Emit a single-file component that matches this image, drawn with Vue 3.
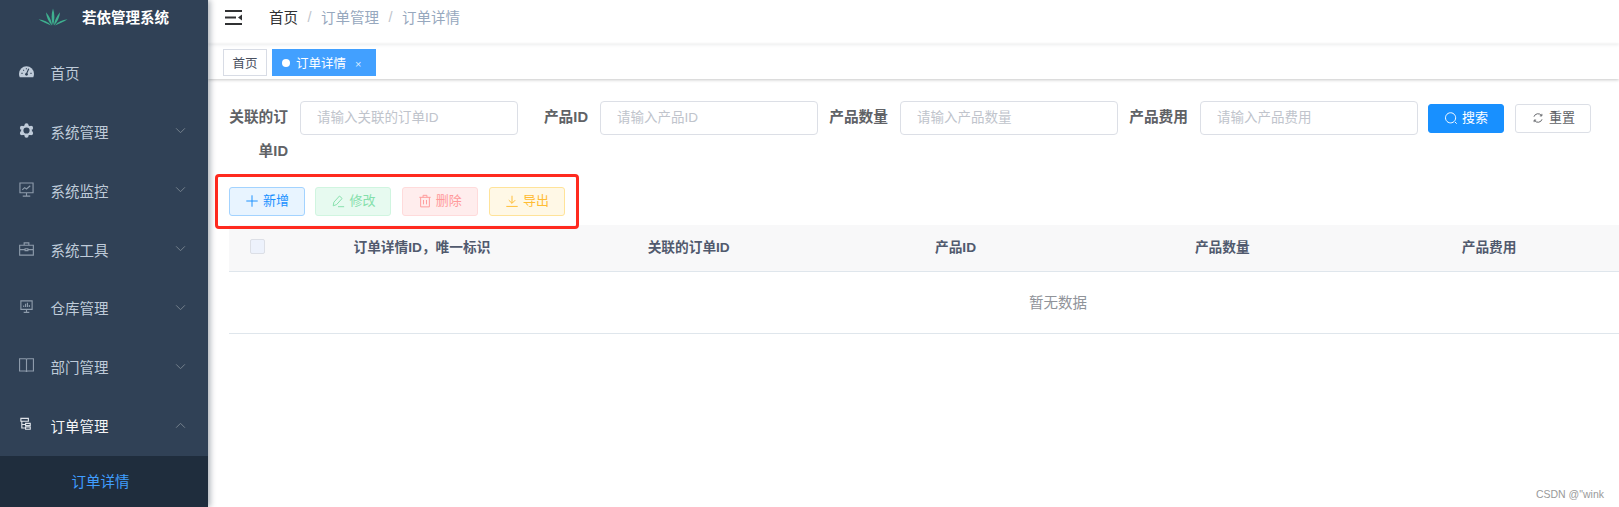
<script setup>
const circ = (x, y, r) => `M${x - r} ${y}a${r} ${r} 0 1 0 ${2 * r} 0a${r} ${r} 0 1 0 ${-2 * r} 0Z`

const gearLobes = [0, 60, 120, 180, 240, 300]
  .map((a) => circ(8 + 5.6 * Math.sin((a * Math.PI) / 180), 8 - 5.6 * Math.cos((a * Math.PI) / 180), 2.2))
  .join('')

const menu = [
  {
    name: '首页',
    icon: [
      { d: 'M.8 14C.2 12.800 0 11.600 0 10.400a8 8 0 0 1 16 0c0 1.200-.2 2.400-.8 3.600Z', c: 'fill' },
      { d: 'M8 10.500 10.400 5M2.600 10h1.200M12.200 10h1.200M4.600 6.400l.7.7M7.900 4.600v1', c: 'cut' },
      { d: circ(8, 11, 1.5), c: 'hole' },
    ],
  },
  {
    name: '系统管理',
    arrow: true,
    icon: [
      { d: circ(8, 8, 5.8) + gearLobes, c: 'fill' },
      { d: circ(8, 8, 3.3), c: 'hole' },
    ],
  },
  {
    name: '系统监控',
    arrow: true,
    icon: [{ d: 'M1 1h14v10.500H1ZM8 11.500v3.300M4 15h8M3.500 8.500 6 6l2 1.500L12 4', c: 'line' }],
  },
  {
    name: '系统工具',
    arrow: true,
    icon: [{ d: 'M.7 4.500h14.600v10.500H.7ZM5.500 4.500V2h5v2.500M.7 9.200h5.800M9.500 9.200h5.800M6.500 8.200h3v2h-3Z', c: 'line' }],
  },
  {
    name: '仓库管理',
    arrow: true,
    icon: [
      { d: 'M2 2h12v9H2ZM8 11v3M5 14.200h6', c: 'line' },
      { d: 'M5 8.500V7M7 8.500V5M9 8.500V4M11 8.500V6.500', c: 'line' },
    ],
  },
  {
    name: '部门管理',
    arrow: true,
    icon: [{ d: 'M.6 .8h6.400c.6 0 1 .4 1 1 0-.6.4-1 1-1h6.400v13H9c-.6 0-1 .4-1 1 0-.6-.4-1-1-1H.6ZM8 1.800v13', c: 'line' }],
  },
  {
    name: '订单管理',
    arrow: true,
    open: true,
    icon: [{ d: 'M2 1.500h8v3H2ZM3 4.500v7.200h4M3 8h4M7 6.800h5v2.400H7ZM7 10.600h5V13H7Z', c: 'line' }],
  },
]

const fields = [
  { label: '关联的订单ID', placeholder: '请输入关联的订单ID' },
  { label: '产品ID', placeholder: '请输入产品ID' },
  { label: '产品数量', placeholder: '请输入产品数量' },
  { label: '产品费用', placeholder: '请输入产品费用' },
]

const actions = [
  { text: '新增', cls: 'blue', d: 'M8 1.500v13M1.500 8h13' },
  { text: '修改', cls: 'green', d: 'M2.500 13.500l.8-4.200 6.400-7 3 2.800-6.300 7ZM8 14.500h7' },
  { text: '删除', cls: 'red', d: 'M1.500 3.800h13M5.800 3.800V1.500h4.400v2.300M3 3.800v10.900h10V3.800M6.300 6.800v5M9.700 6.800v5' },
  { text: '导出', cls: 'amber', d: 'M8 2v8.500M4.300 7 8 10.700 11.700 7M1.500 14.200h13' },
]

const columns = ['订单详情ID，唯一标识', '关联的订单ID', '产品ID', '产品数量', '产品费用', '']
</script>

<template>
  <div class="app">
    <aside class="sidebar">
      <div class="logo">
        <svg class="logo-mark" viewBox="0 0 32 20">
          <path d="M16 19C14 13 14 7 16 1c2 6 2 12 0 18Z" />
          <path d="M15 19C11 15 9 10 8.500 5c3.500 4 6 9 6.500 14Z" />
          <path d="M17 19c4-4 6-9 6.500-14-3.500 4-6 9-6.500 14Z" />
          <path d="M14 19C9 17 4 15 .5 12.500 6 13 11 15.500 14 19Z" />
          <path d="M18 19c5-2 10-4 13.500-6.500C26 13 21 15.500 18 19Z" />
        </svg>
        <span>若依管理系统</span>
      </div>
      <nav class="menu">
        <div v-for="item in menu" :key="item.name" class="menu-item" :class="{ open: item.open }">
          <svg class="menu-icon" viewBox="0 0 16 16">
            <path v-for="(p, i) in item.icon" :key="i" :d="p.d" :class="p.c" />
          </svg>
          <span class="menu-text">{{ item.name }}</span>
          <svg v-if="item.arrow" class="chevron" viewBox="0 0 12 8">
            <path :d="item.open ? 'M1 6.500 6 1.500l5 5' : 'M1 1.500l5 5 5-5'" />
          </svg>
        </div>
        <div class="sub-item">订单详情</div>
      </nav>
    </aside>

    <main class="main">
      <header class="navbar">
        <svg class="hamburger" viewBox="0 0 17 15">
          <path d="M0 1h17M0 7.500h11M0 14h17" />
          <path class="tip" d="M17 4.500v6l-4-3Z" />
        </svg>
        <div class="breadcrumb">
          <span class="crumb-home">首页</span>
          <span class="sep">/</span>
          <span>订单管理</span>
          <span class="sep">/</span>
          <span>订单详情</span>
        </div>
      </header>

      <div class="tags">
        <span class="tag">首页</span>
        <span class="tag active"><i class="dot"></i>订单详情<em class="close">×</em></span>
      </div>

      <section class="content">
        <form class="search" @submit.prevent>
          <div v-for="f in fields" :key="f.label" class="field">
            <label class="field-label">{{ f.label }}</label>
            <input class="field-input" :placeholder="f.placeholder" />
          </div>
          <button class="btn primary" type="button">
            <svg viewBox="0 0 16 16"><path d="M12.500 12.500 14.500 14.500M7.500 2a5.800 5.800 0 1 0 .01 0Z" /></svg>
            搜索
          </button>
          <button class="btn plain" type="button">
            <svg viewBox="0 0 16 16"><path d="M3.400 6.500A4.800 4.800 0 0 1 12 5.300M12.600 9.500A4.800 4.800 0 0 1 4 10.700M12.400 3.300v2.300h-2.300M3.600 12.700v-2.300h2.300" /></svg>
            重置
          </button>
        </form>

        <div class="toolbar">
          <button v-for="a in actions" :key="a.text" class="btn action" :class="a.cls" type="button">
            <svg viewBox="0 0 16 16"><path :d="a.d" /></svg>
            {{ a.text }}
          </button>
        </div>

        <div class="table">
          <div class="thead">
            <div class="cell check"><span class="checkbox"></span></div>
            <div v-for="(c, i) in columns" :key="i" class="cell">{{ c }}</div>
          </div>
          <div class="empty">暂无数据</div>
        </div>
      </section>

      <div class="annotation"></div>
      <div class="watermark">CSDN @"wink</div>
    </main>
  </div>
</template>

<style>
html,
body {
  margin: 0;
  overflow: hidden;
  background: #fff;
}
</style>

<style scoped>
.app {
  display: flex;
  width: 1619px;
  height: 507px;
  overflow: hidden;
  font-family: "Liberation Sans", "Noto Sans CJK SC", sans-serif;
}

.sidebar {
  flex: 0 0 208px;
  background: #304156;
  box-shadow: 2px 0 6px rgba(0, 21, 41, 0.35);
  z-index: 2;
  display: flex;
  flex-direction: column;
}

.logo {
  box-sizing: border-box;
  height: 43.600px;
  padding: 0 0 10px 38px;
  display: flex;
  align-items: center;
  gap: 14px;
  color: #fff;
  font-size: 14.500px;
  font-weight: 700;
}

.logo-mark {
  width: 30px;
  height: 20px;
  fill: #3fb08f;
}

.menu-item {
  box-sizing: border-box;
  height: 58.900px;
  padding-bottom: 1px;
  display: flex;
  align-items: center;
  padding-left: 19px;
  color: #bfcbd9;
  font-size: 14.500px;
}

.menu-item.open {
  color: #f4f4f5;
}

.menu-icon {
  width: 15px;
  height: 15px;
  margin-right: 16.500px;
  margin-top: -2px;
  flex: none;
}

.menu-icon .fill {
  fill: #bfcbd9;
}

.menu-icon .hole {
  fill: #304156;
}

.menu-icon .cut {
  fill: none;
  stroke: #304156;
  stroke-width: 1.200;
}

.menu-icon .line {
  fill: none;
  stroke: #8d9bab;
  stroke-width: 1.200;
}

.menu-item.open .menu-icon .line {
  stroke: #dfe4ea;
}

.menu-text {
  flex: 1;
}

.chevron {
  width: 11px;
  height: 7px;
  margin: -1px 22px 0 0;
  fill: none;
  stroke: #77838f;
  stroke-width: 1.100;
}

.sub-item {
  box-sizing: border-box;
  height: 51.300px;
  line-height: 49.300px;
  padding: 2px 7px 0 0;
  background: #1f2d3d;
  color: #409eff;
  font-size: 14.500px;
  text-align: center;
}

.main {
  flex: 1;
  min-width: 0;
  position: relative;
}

.navbar {
  box-sizing: border-box;
  height: 44px;
  padding: 0 0 9px 17px;
  display: flex;
  align-items: center;
  box-shadow: 0 1px 3px rgba(0, 21, 41, 0.08);
}

.hamburger {
  width: 17px;
  height: 15px;
  fill: none;
  stroke: #303133;
  stroke-width: 2;
}

.hamburger .tip {
  fill: #303133;
  stroke: none;
}

.breadcrumb {
  margin-left: 27px;
  padding-bottom: 2px;
  font-size: 14.500px;
  color: #97a8be;
  display: flex;
  align-items: center;
}

.crumb-home {
  color: #303133;
}

.sep {
  margin: 0 9.500px;
  color: #c0c4cc;
}

.tags {
  box-sizing: border-box;
  height: 35px;
  padding: 5px 0 0 15px;
  display: flex;
  gap: 5px;
  box-shadow: 0 1px 3px rgba(0, 0, 0, 0.22);
}

.tag {
  box-sizing: border-box;
  height: 27px;
  padding: 0 8.500px;
  border: 1px solid #d8dce5;
  color: #495060;
  font-size: 12.500px;
  display: flex;
  align-items: center;
}

.tag.active {
  width: 104px;
  padding: 0 0 0 9px;
  background: #42a0ff;
  border-color: #42a0ff;
  color: #fff;
}

.dot {
  width: 8px;
  height: 8px;
  border-radius: 50%;
  background: #fff;
  margin-right: 6px;
}

.close {
  font-style: normal;
  font-size: 11px;
  margin-left: 9px;
  margin-top: 2px;
  color: #d8ebff;
}

.content {
  padding: 22px 0 0 0;
}

.search {
  display: flex;
  align-items: flex-start;
  height: 86px;
}

.field {
  display: flex;
  margin-right: 11px;
}

.field:first-child {
  padding-left: 21px;
}

.field:nth-child(4) {
  margin-right: 10px;
}

.field-label {
  box-sizing: border-box;
  width: 71px;
  padding: 0 12px 0 0;
  line-height: 34px;
  margin-top: -1px;
  text-align: right;
  font-size: 14.700px;
  font-weight: 700;
  color: #606266;
}

.field-input {
  box-sizing: border-box;
  width: 218px;
  height: 34px;
  padding: 0 16px 2px;
  border: 1px solid #dcdfe6;
  border-radius: 4px;
  outline: none;
  font: inherit;
  font-size: 13.500px;
  background: #fff;
}

.field-input::placeholder {
  color: #c0c4cc;
  opacity: 1;
}

.btn {
  box-sizing: border-box;
  width: 76px;
  height: 29px;
  padding: 0 0 5px;
  border: 1px solid #dcdfe6;
  border-radius: 3px;
  background: #fff;
  font: inherit;
  font-size: 13px;
  display: flex;
  align-items: center;
  justify-content: center;
  gap: 4px;
}

.btn svg {
  width: 14px;
  height: 14px;
  margin-top: 3px;
  fill: none;
  stroke: currentColor;
  stroke-width: 1.100;
}

.search .btn {
  margin-top: 3px;
}

.btn.primary {
  background: #1890ff;
  border-color: #1890ff;
  color: #fff;
  margin-right: 11px;
}

.btn.plain {
  color: #606266;
}

.toolbar {
  display: flex;
  gap: 10.400px;
  margin-left: 21px;
  height: 38px;
}

.btn.action:last-child {
  margin-left: 0.800px;
}

.btn.blue {
  background: #e8f4ff;
  border-color: #a3d3ff;
  color: #1890ff;
}

.btn.green {
  background: #e7faf0;
  border-color: #d0f5e0;
  color: #84e0ab;
}

.btn.red {
  background: #ffeded;
  border-color: #ffdbdb;
  color: #ff9a9a;
}

.btn.amber {
  background: #fff8e6;
  border-color: #ffe399;
  color: #ffbc33;
}

.table {
  width: 1658px;
  margin-left: 21px;
}

.thead {
  box-sizing: border-box;
  height: 47px;
  display: grid;
  grid-template-columns: 59.500px repeat(6, 266.800px);
  background: #f8f8f9;
  border-bottom: 1px solid #dfe6ec;
  color: #515a6e;
  font-size: 13.700px;
  font-weight: 700;
}

.cell {
  display: flex;
  align-items: center;
  justify-content: center;
  padding-bottom: 4px;
}

.cell.check {
  justify-content: flex-start;
  padding-left: 21px;
}

.checkbox {
  box-sizing: border-box;
  width: 15px;
  height: 15px;
  background: #edf2fc;
  border: 1px solid #dcdfe6;
  border-radius: 2px;
}

.empty {
  box-sizing: border-box;
  height: 62px;
  padding-top: 1px;
  line-height: 60px;
  text-align: center;
  color: #909399;
  font-size: 14.500px;
  border-bottom: 1px solid #dfe6ec;
}

.annotation {
  position: absolute;
  left: 7px;
  top: 174px;
  width: 364px;
  height: 55px;
  box-sizing: border-box;
  border: 3px solid #ff2a1f;
  border-radius: 4px;
}

.watermark {
  position: absolute;
  right: 15px;
  top: 488px;
  font-size: 10.500px;
  color: #9a9a9a;
}
</style>
